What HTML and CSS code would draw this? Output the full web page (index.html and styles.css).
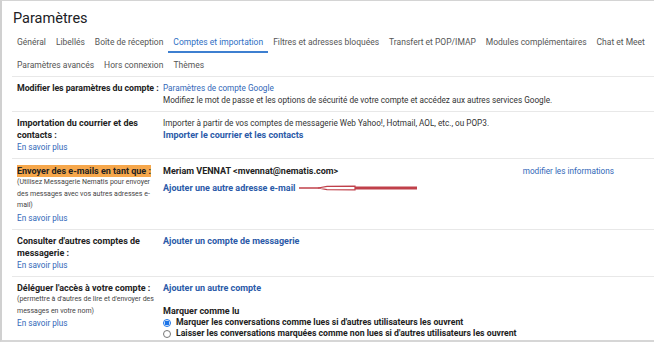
FILE: index.html
```html
<!DOCTYPE html>
<html lang="fr">
<head>
<meta charset="utf-8">
<link rel="stylesheet" href="styles.css">
</head>
<body>
<div class="page">
  <h1 class="title">Paramètres</h1>
  <nav class="tabs">
    <div class="tab-row">
      <span class="tab">Général</span>
      <span class="tab">Libellés</span>
      <span class="tab">Boîte de réception</span>
      <span class="tab active">Comptes et importation</span>
      <span class="tab">Filtres et adresses bloquées</span>
      <span class="tab">Transfert et POP/IMAP</span>
      <span class="tab">Modules complémentaires</span>
      <span class="tab">Chat et Meet</span>
    </div>
    <div class="tab-row second">
      <span class="tab">Paramètres avancés</span>
      <span class="tab">Hors connexion</span>
      <span class="tab">Thèmes</span>
    </div>
  </nav>

  <div class="settings">
    <div class="row r1">
      <div class="label"><b class="tight">Modifier les paramètres du compte :</b></div>
      <div class="value">
        <div><a class="link">Paramètres de compte Google</a></div>
        <div>Modifiez le mot de passe et les options de sécurité de votre compte et accédez aux autres services Google.</div>
      </div>
    </div>

    <div class="row r2">
      <div class="label"><b>Importation du courrier et des<br>contacts :</b><div><a class="link">En savoir plus</a></div></div>
      <div class="value">
        <div>Importer à partir de vos comptes de messagerie Web Yahoo!, Hotmail, AOL, etc., ou POP3.</div>
        <div><a class="link strong">Importer le courrier et les contacts</a></div>
      </div>
    </div>

    <div class="row r3">
      <div class="label">
        <b class="hl">Envoyer des e-mails en tant que :</b>
        <div class="small">(Utilisez Messagerie Nematis pour envoyer<br>des messages avec vos autres adresses e-<br>mail)</div>
        <div><a class="link">En savoir plus</a></div>
      </div>
      <div class="value">
        <div class="sender">
          <b>Meriam VENNAT &lt;mvennat@nematis.com&gt;</b>
          <a class="link edit">modifier les informations</a>
        </div>
        <div class="add">
          <a class="link strong">Ajouter une autre adresse e-mail</a>
          <svg class="arrow" width="124" height="8" viewBox="0 0 124 8">
            <line x1="2" y1="4" x2="24" y2="4" stroke="#c0404a" stroke-width="1.5"/>
            <path d="M21 4 L30 2.4 L58 2.2 L58 5.8 L30 5.6 Z" fill="#fff" stroke="#c0404a" stroke-width="1.2"/>
            <line x1="58" y1="4" x2="120" y2="4" stroke="#c0404a" stroke-width="3"/>
          </svg>
        </div>
      </div>
    </div>

    <div class="row r4">
      <div class="label"><b>Consulter d'autres comptes de<br>messagerie :</b><div><a class="link">En savoir plus</a></div></div>
      <div class="value">
        <div><a class="link strong">Ajouter un compte de messagerie</a></div>
      </div>
    </div>

    <div class="row r5">
      <div class="label">
        <b>Déléguer l'accès à votre compte :</b>
        <div class="small">(permettre à d'autres de lire et d'envoyer des<br>messages en votre nom)</div>
        <div><a class="link">En savoir plus</a></div>
      </div>
      <div class="value">
        <div><a class="link strong">Ajouter un autre compte</a></div>
        <div class="mark"><b>Marquer comme lu</b></div>
        <label class="radio"><span class="dot on"></span><b>Marquer les conversations comme lues si d'autres utilisateurs les ouvrent</b></label>
        <label class="radio"><span class="dot"></span><b>Laisser les conversations marquées comme non lues si d'autres utilisateurs les ouvrent</b></label>
      </div>
    </div>
  </div>
</div>
</body>
</html>
```

FILE: styles.css
```css
* { box-sizing: border-box; }
html, body { margin: 0; padding: 0; background: #fff; }
body {
  font-family: Roboto, "Liberation Sans", Arial, sans-serif;
  color: #222;
  font-size: 9px;
  line-height: 12px;
}
.page {
  width: 654px;
  height: 342px;
  border-top: 1px solid #d4d4d4;
  border-left: 2px solid #d0d0d0;
  border-bottom: 2px solid #d6d6d6;
  overflow: hidden;
}
.title {
  margin: 0;
  padding: 9px 0 0 11px;
  font-size: 14.5px;
  line-height: 18px;
  font-weight: 400;
  color: #202124;
}
.tabs { padding-left: 10px; font-size: 8.5px; }
.tab-row { display: flex; }
.tab-row:first-child { padding-top: 8px; }
.tab-row.second { margin-top: 6px; padding-bottom: 5px; }
.tab {
  padding: 0 5px 3px;
  border-bottom: 2px solid transparent;
  color: #555;
  white-space: nowrap;
}
.tab-row.second .tab { padding-bottom: 0; border-bottom: 0; }
.tab.active { color: #2f6fc4; border-bottom-color: #3d7fd0; }

.settings { margin-left: 10px; }
.row {
  display: grid;
  grid-template-columns: 146px 1fr;
  border-top: 1px solid #e8e8e8;
  padding: 5px 0 5px 5px;
  font-size: 8.2px;
  color: #333;
}
.label { white-space: nowrap; }
.row b { font-weight: 700; color: #222; font-size: 9px; }
.row b.tight { font-size: 8.8px; letter-spacing: -0.05px; }
.link { color: #3267b8; text-decoration: none; }
.link.strong { font-weight: 700; color: #2a5aa8; font-size: 9px; }
.hl { background: #f6a74b; padding: 1px 0; }
.small { font-size: 7px; line-height: 11.5px; color: #444; }
.r3 { padding-top: 6px; padding-bottom: 5.5px; }
.sender { display: flex; justify-content: space-between; padding-right: 40px; }
.add { display: flex; align-items: center; margin-top: 5px; }
.arrow { margin-left: 2px; }
.mark { margin-top: 11px; }
.radio { display: flex; align-items: center; line-height: 11px; }
.row .radio b { font-size: 8.7px; }
.dot {
  width: 8px; height: 8px; border-radius: 50%;
  border: 1px solid #777;
  margin-right: 5px;
  flex: none;
}
.dot.on { border-color: #1a73e8; background: radial-gradient(circle, #1a73e8 0 2.2px, #fff 2.6px); }
```
